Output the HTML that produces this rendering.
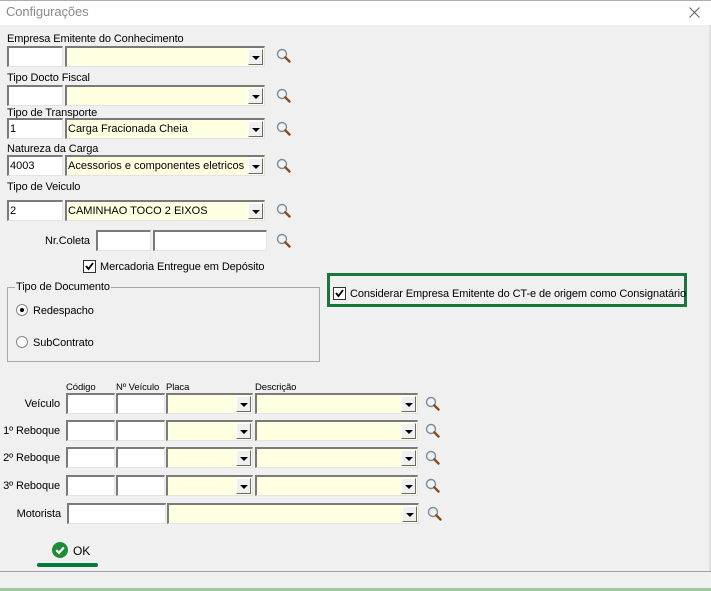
<!DOCTYPE html>
<html><head><meta charset="utf-8"><style>
*{box-sizing:border-box;margin:0;padding:0}
body{width:711px;height:591px;background:#f0f0f0;font-family:"Liberation Sans",sans-serif;font-size:11px;color:#000;position:relative;overflow:hidden}
.a{position:absolute}
.t{position:absolute;white-space:nowrap;line-height:14px;letter-spacing:-0.1px}
.box{position:absolute;background:#fff;border-style:solid;border-width:2px 1px 1px 2px;border-color:#7a7a7a #e3e3e3 #e3e3e3 #7a7a7a;}
.y{background:#ffffe1}
.box span{position:absolute;left:1px;top:3px;font-size:11px;line-height:13px;white-space:nowrap}
.dd{position:absolute;top:1px;right:1px;width:15px;bottom:1px;background:#f0f0f0;border:1px solid;border-color:#fff #6a6a6a #6a6a6a #fff}
.dd:after{content:"";position:absolute;left:3px;top:6px;border-left:4px solid transparent;border-right:4px solid transparent;border-top:4px solid #000}
.cb{position:absolute;width:13px;height:13px;background:#fff;border:1px solid #333}
</style></head><body>
<div class="a" style="left:0;top:0;width:711px;height:25px;background:#fff;border-top:1px solid #aab"></div>
<div class="t" style="left:6px;top:5px;font-size:13px;color:#8a8a8a">Configurações</div>
<svg class="a" style="left:689px;top:7px" width="11" height="11"><path d="M0.5 0.5L10.5 10.5M10.5 0.5L0.5 10.5" stroke="#666" stroke-width="1.1"/></svg>
<div class="a" style="left:709px;top:25px;width:2px;height:546px;background:#e0e0e0"></div>

<svg width="0" height="0" style="position:absolute"><defs><g id="mg"><circle cx="6" cy="6" r="4.5" fill="#eef3f6" stroke="#7c8a95" stroke-width="1.4"/><path d="M9.3 9.3L13.5 13.5" stroke="#8a4a1a" stroke-width="2.4" stroke-linecap="round"/></g></defs></svg>

<div class="t" style="left:7px;top:32px">Empresa Emitente do Conhecimento</div>
<div class="box" style="left:7px;top:46px;width:56px;height:21px"></div>
<div class="box y" style="left:65px;top:46px;width:200px;height:21px"><div class="dd"></div></div>
<svg class="a" style="left:276px;top:48px" width="15" height="15"><use href="#mg"/></svg>

<div class="t" style="left:7px;top:71px">Tipo Docto Fiscal</div>
<div class="box" style="left:7px;top:85px;width:56px;height:21px"></div>
<div class="box y" style="left:65px;top:85px;width:200px;height:21px"><div class="dd"></div></div>
<svg class="a" style="left:276px;top:88px" width="15" height="15"><use href="#mg"/></svg>

<div class="t" style="left:7px;top:106px">Tipo de Transporte</div>
<div class="box" style="left:7px;top:118px;width:56px;height:21px"><span>1</span></div>
<div class="box y" style="left:65px;top:118px;width:200px;height:21px"><span>Carga Fracionada Cheia</span><div class="dd"></div></div>
<svg class="a" style="left:276px;top:121px" width="15" height="15"><use href="#mg"/></svg>

<div class="t" style="left:7px;top:142px">Natureza da Carga</div>
<div class="box" style="left:7px;top:155px;width:56px;height:21px"><span>4003</span></div>
<div class="box y" style="left:65px;top:155px;width:200px;height:21px"><span>Acessorios e componentes eletricos</span><div class="dd"></div></div>
<svg class="a" style="left:276px;top:158px" width="15" height="15"><use href="#mg"/></svg>

<div class="t" style="left:7px;top:180px">Tipo de Veiculo</div>
<div class="box" style="left:7px;top:200px;width:56px;height:21px"><span>2</span></div>
<div class="box y" style="left:65px;top:200px;width:200px;height:21px"><span>CAMINHAO TOCO 2 EIXOS</span><div class="dd"></div></div>
<svg class="a" style="left:276px;top:203px" width="15" height="15"><use href="#mg"/></svg>

<div class="t" style="left:45px;top:234px">Nr.Coleta</div>
<div class="box" style="left:96px;top:230px;width:55px;height:21px"></div>
<div class="box" style="left:153px;top:230px;width:114px;height:21px"></div>
<svg class="a" style="left:276px;top:233px" width="15" height="15"><use href="#mg"/></svg>
<div class="cb" style="left:83px;top:260px"></div>
<svg class="a" style="left:84px;top:261px" width="11" height="11"><path d="M2 5L4.5 8L9 2" stroke="#000" stroke-width="1.8" fill="none"/></svg>
<div class="t" style="left:100px;top:260px">Mercadoria Entregue em Depósito</div>

<div class="a" style="left:7px;top:287px;width:313px;height:75px;border:1px solid #a8a8a8"></div>
<div class="t" style="left:15px;top:280px;background:#f0f0f0;padding:0 1px">Tipo de Documento</div>
<div class="a" style="left:16px;top:304px;width:12px;height:12px;border-radius:50%;background:#fff;border:1px solid #888"></div>
<div class="a" style="left:20px;top:308px;width:4px;height:4px;border-radius:50%;background:#000"></div>
<div class="t" style="left:33px;top:304px">Redespacho</div>
<div class="a" style="left:16px;top:336px;width:12px;height:12px;border-radius:50%;background:#fff;border:1px solid #888"></div>
<div class="t" style="left:33px;top:336px">SubContrato</div>

<div class="a" style="left:327px;top:273px;width:360px;height:34px;border:3px solid #18773a"></div>
<div class="cb" style="left:333px;top:287px"></div>
<svg class="a" style="left:334px;top:288px" width="11" height="11"><path d="M2 5L4.5 8L9 2" stroke="#000" stroke-width="1.8" fill="none"/></svg>
<div class="t" style="left:350px;top:287px">Considerar Empresa Emitente do CT-e de origem como Consignatário</div>

<div class="t" style="left:66px;top:381px;font-size:9.5px">Código</div>
<div class="t" style="left:116px;top:381px;font-size:9.5px">Nº Veículo</div>
<div class="t" style="left:166px;top:381px;font-size:9.5px">Placa</div>
<div class="t" style="left:255px;top:381px;font-size:9.5px">Descrição</div>

<div class="t" style="left:0;width:60px;text-align:right;top:397px">Veículo</div>
<div class="t" style="left:0;width:60px;text-align:right;top:424px">1º Reboque</div>
<div class="t" style="left:0;width:60px;text-align:right;top:451px">2º Reboque</div>
<div class="t" style="left:0;width:60px;text-align:right;top:479px">3º Reboque</div>
<div class="t" style="left:0;width:61px;text-align:right;top:507px">Motorista</div>

<div class="box" style="left:66px;top:393px;width:49px;height:21px"></div>
<div class="box" style="left:116px;top:393px;width:49px;height:21px"></div>
<div class="box y" style="left:166px;top:393px;width:87px;height:21px"><div class="dd"></div></div>
<div class="box y" style="left:255px;top:393px;width:163px;height:21px"><div class="dd"></div></div>
<svg class="a" style="left:425px;top:396px" width="15" height="15"><use href="#mg"/></svg>

<div class="box" style="left:66px;top:420px;width:49px;height:21px"></div>
<div class="box" style="left:116px;top:420px;width:49px;height:21px"></div>
<div class="box y" style="left:166px;top:420px;width:87px;height:21px"><div class="dd"></div></div>
<div class="box y" style="left:255px;top:420px;width:163px;height:21px"><div class="dd"></div></div>
<svg class="a" style="left:425px;top:423px" width="15" height="15"><use href="#mg"/></svg>

<div class="box" style="left:66px;top:447px;width:49px;height:21px"></div>
<div class="box" style="left:116px;top:447px;width:49px;height:21px"></div>
<div class="box y" style="left:166px;top:447px;width:87px;height:21px"><div class="dd"></div></div>
<div class="box y" style="left:255px;top:447px;width:163px;height:21px"><div class="dd"></div></div>
<svg class="a" style="left:425px;top:450px" width="15" height="15"><use href="#mg"/></svg>

<div class="box" style="left:66px;top:475px;width:49px;height:21px"></div>
<div class="box" style="left:116px;top:475px;width:49px;height:21px"></div>
<div class="box y" style="left:166px;top:475px;width:87px;height:21px"><div class="dd"></div></div>
<div class="box y" style="left:255px;top:475px;width:163px;height:21px"><div class="dd"></div></div>
<svg class="a" style="left:425px;top:478px" width="15" height="15"><use href="#mg"/></svg>

<div class="box" style="left:67px;top:503px;width:99px;height:21px"></div>
<div class="box y" style="left:167px;top:503px;width:252px;height:21px"><div class="dd"></div></div>
<svg class="a" style="left:427px;top:506px" width="15" height="15"><use href="#mg"/></svg>

<svg class="a" style="left:52px;top:542px" width="16" height="16"><circle cx="8" cy="8" r="8" fill="#1f8a3a"/><path d="M4.3 8.2L7 10.8L11.8 5.5" stroke="#fff" stroke-width="2.2" fill="none"/></svg>
<div class="t" style="left:73px;top:544px;font-size:12px">OK</div>
<div class="a" style="left:37px;top:563px;width:61px;height:4px;border-radius:2px;background:#047a3a"></div>
<div class="a" style="left:0;top:571px;width:711px;height:1px;background:#a0a0a0"></div>
<div class="a" style="left:0;top:588px;width:711px;height:3px;background:#9fc99f"></div>
</body></html>
